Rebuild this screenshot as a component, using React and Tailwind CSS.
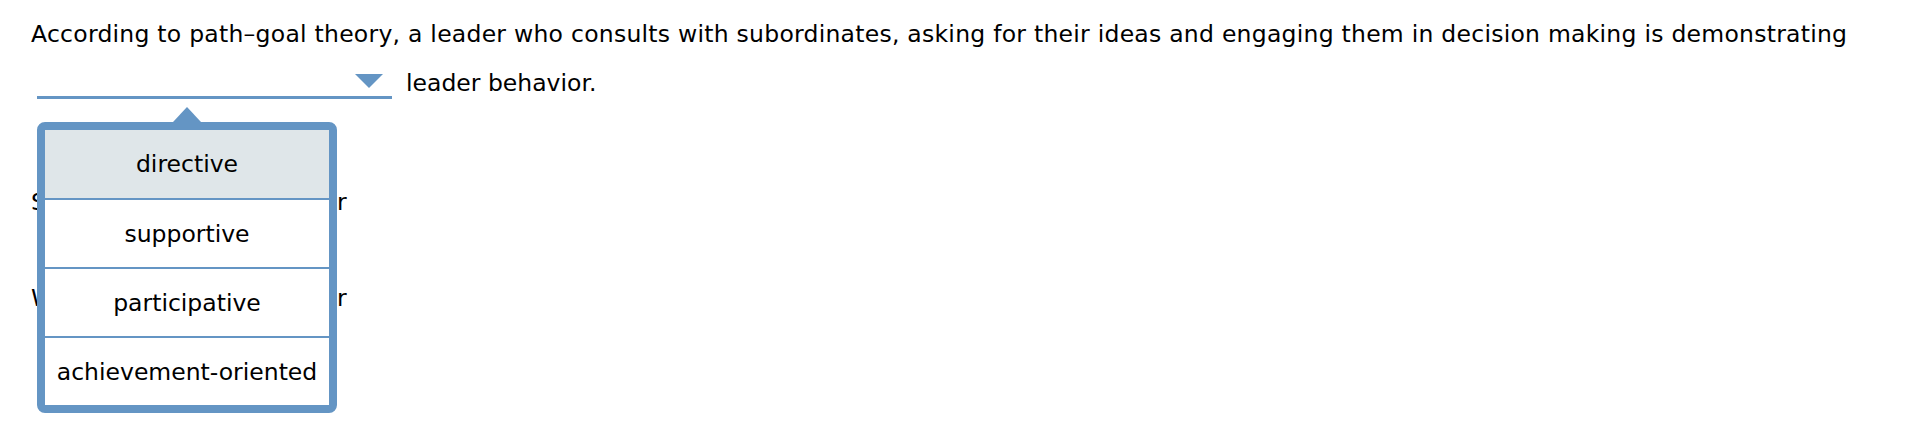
import { useState } from 'react'

const options = ['directive', 'supportive', 'participative', 'achievement-oriented']

export default function App() {
  const [selected, setSelected] = useState(null)
  const [hovered, setHovered] = useState(0)
  const [open, setOpen] = useState(true)

  return (
    <div
      className="min-h-screen bg-white text-black pl-[31px] pt-[19px] text-[23.5px] leading-[30px]"
      style={{ fontFamily: '"DejaVu Sans", Verdana, sans-serif' }}
    >
      <p className="whitespace-nowrap tracking-[0.25px]">
        According to path–goal theory, a leader who consults with subordinates, asking for their ideas and engaging them in decision making is demonstrating
      </p>

      {/* Answer blank with dropdown */}
      <div className="flex items-end mt-[17px] ml-[6px]">
        <div className="relative">
          <button
            onClick={() => setOpen(!open)}
            className="w-[355px] h-[33px] border-b-[3px] border-[#6495c4] flex items-center justify-between pr-[9px] pl-2"
          >
            <span>{selected}</span>
            <span className="w-0 h-0 border-l-[14px] border-r-[14px] border-t-[14px] border-l-transparent border-r-transparent border-t-[#6495c4]" />
          </button>

          {open && (
            <div className="absolute left-0 top-[56px] z-10 w-[300px]">
              {/* caret */}
              <div className="absolute left-1/2 -translate-x-1/2 -top-[15px] w-0 h-0 border-l-[14px] border-r-[14px] border-b-[15px] border-l-transparent border-r-transparent border-b-[#6495c4]" />
              <ul className="bg-white border-[8px] border-[#6495c4] rounded-[8px] flex flex-col">
                {options.map((opt, i) => (
                  <li
                    key={opt}
                    onMouseEnter={() => setHovered(i)}
                    onClick={() => {
                      setSelected(opt)
                      setOpen(false)
                    }}
                    className={`flex items-center justify-center cursor-pointer ${
                      i === 0 ? 'h-[68px]' : 'h-[69px] border-t-2 border-[#6495c4]'
                    } ${hovered === i ? 'bg-[#dfe6e9]' : 'bg-white'}`}
                  >
                    {opt}
                  </li>
                ))}
              </ul>
            </div>
          )}
        </div>
        <span className="ml-[14px] pb-[1px]">leader behavior.</span>
      </div>

      {/* following question text, mostly under the open list */}
      <div className="flex mt-[88px]">
        <span className="w-[306px]">S</span>
        <span>r</span>
      </div>
      <div className="flex mt-[66px]">
        <span className="w-[306px]">W</span>
        <span>r</span>
      </div>
    </div>
  )
}
